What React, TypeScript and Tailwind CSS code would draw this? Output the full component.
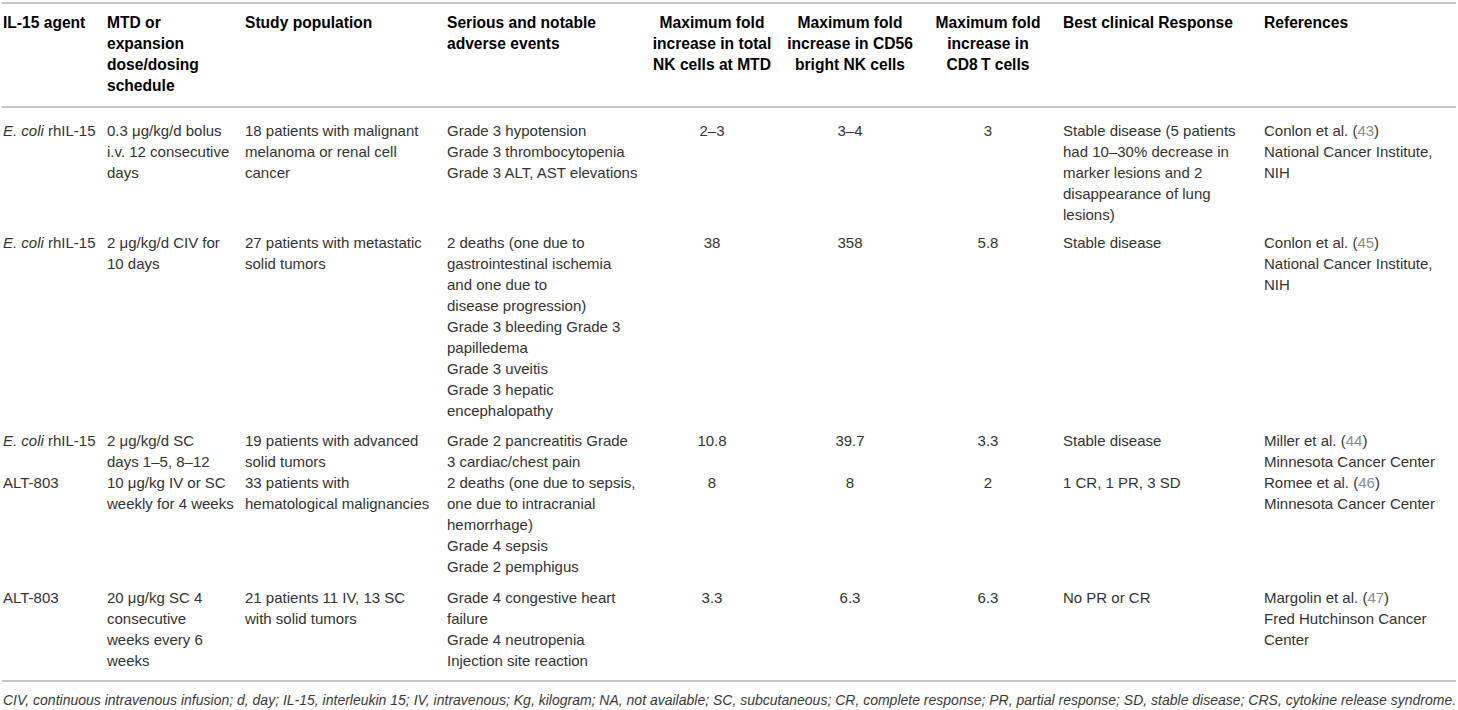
import React from 'react';

type Cell = React.ReactNode[];

type Row = {
  cells: Cell[];
  height: string;
};

const cols = 'grid grid-cols-[104px_138px_202px_196px_144px_132px_144px_201px_1fr]';

// columns 4,5,6 (0-based) are the numeric ones, centered
const centered = [4, 5, 6];

const Ref = ({ n }: { n: number }) => <span className="text-[#8c8c8c]">{n}</span>;

const header: Cell[] = [
  ['IL-15 agent'],
  ['MTD or', 'expansion', 'dose/dosing', 'schedule'],
  ['Study population'],
  ['Serious and notable', 'adverse events'],
  ['Maximum fold', 'increase in total', 'NK cells at MTD'],
  ['Maximum fold', 'increase in CD56', 'bright NK cells'],
  ['Maximum fold', 'increase in', 'CD8\u2009T cells'],
  ['Best clinical Response'],
  ['References'],
];

const ecoli = (
  <>
    <i>E. coli</i> rhIL-15
  </>
);

const rows: Row[] = [
  {
    height: 'h-[112px]',
    cells: [
      [ecoli],
      ['0.3 μg/kg/d bolus', 'i.v. 12 consecutive', 'days'],
      ['18 patients with malignant', 'melanoma or renal cell', 'cancer'],
      ['Grade 3 hypotension', 'Grade 3 thrombocytopenia', 'Grade 3 ALT, AST elevations'],
      ['2–3'],
      ['3–4'],
      ['3'],
      ['Stable disease (5 patients', 'had 10–30% decrease in', 'marker lesions and 2', 'disappearance of lung', 'lesions)'],
      [<>Conlon et al. (<Ref n={43} />)</>, 'National Cancer Institute,', 'NIH'],
    ],
  },
  {
    height: 'h-[198px]',
    cells: [
      [ecoli],
      ['2 μg/kg/d CIV for', '10 days'],
      ['27 patients with metastatic', 'solid tumors'],
      [
        '2 deaths (one due to',
        'gastrointestinal ischemia',
        'and one due to',
        'disease progression)',
        'Grade 3 bleeding Grade 3',
        'papilledema',
        'Grade 3 uveitis',
        'Grade 3 hepatic',
        'encephalopathy',
      ],
      ['38'],
      ['358'],
      ['5.8'],
      ['Stable disease'],
      [<>Conlon et al. (<Ref n={45} />)</>, 'National Cancer Institute,', 'NIH'],
    ],
  },
  {
    height: 'h-[42px]',
    cells: [
      [ecoli],
      ['2 μg/kg/d SC', 'days 1–5, 8–12'],
      ['19 patients with advanced', 'solid tumors'],
      ['Grade 2 pancreatitis Grade', '3 cardiac/chest pain'],
      ['10.8'],
      ['39.7'],
      ['3.3'],
      ['Stable disease'],
      [<>Miller et al. (<Ref n={44} />)</>, 'Minnesota Cancer Center'],
    ],
  },
  {
    height: 'h-[115px]',
    cells: [
      ['ALT-803'],
      ['10 μg/kg IV or SC', 'weekly for 4 weeks'],
      ['33 patients with', 'hematological malignancies'],
      ['2 deaths (one due to sepsis,', 'one due to intracranial', 'hemorrhage)', 'Grade 4 sepsis', 'Grade 2 pemphigus'],
      ['8'],
      ['8'],
      ['2'],
      ['1 CR, 1 PR, 3 SD'],
      [<>Romee et al. (<Ref n={46} />)</>, 'Minnesota Cancer Center'],
    ],
  },
  {
    height: 'h-[93px]',
    cells: [
      ['ALT-803'],
      ['20 μg/kg SC 4', 'consecutive', 'weeks every 6', 'weeks'],
      ['21 patients 11 IV, 13 SC', 'with solid tumors'],
      ['Grade 4 congestive heart', 'failure', 'Grade 4 neutropenia', 'Injection site reaction'],
      ['3.3'],
      ['6.3'],
      ['6.3'],
      ['No PR or CR'],
      [<>Margolin et al. (<Ref n={47} />)</>, 'Fred Hutchinson Cancer', 'Center'],
    ],
  },
];

function Lines({ lines, center }: { lines: Cell; center: boolean }) {
  return (
    <div className={center ? 'text-center' : 'pl-[3px]'}>
      {lines.map((l, i) => (
        <div key={i} className="whitespace-nowrap">
          {l}
        </div>
      ))}
    </div>
  );
}

export default function App() {
  return (
    <div className="w-[1458px] h-[710px] bg-white pt-[2px] font-['Liberation_Sans',Arial,sans-serif] overflow-hidden">
      <div className="mx-[2px] h-[2px] bg-[#c6c6c6]" />
      <div className={`${cols} pt-[8px] pb-[10px] text-[15.6px] leading-[21px] font-bold text-black`}>
        {header.map((c, i) => (
          <Lines key={i} lines={c} center={centered.includes(i)} />
        ))}
      </div>
      <div className="mx-[2px] h-[2px] bg-[#c6c6c6]" />
      <div className="pt-[12px] text-[15px] leading-[21px] text-[#333333]">
        {rows.map((r, ri) => (
          <div key={ri} className={`${cols} ${r.height}`}>
            {r.cells.map((c, i) => (
              <Lines key={i} lines={c} center={centered.includes(i)} />
            ))}
          </div>
        ))}
      </div>
      <div className="mx-[2px] h-[2px] bg-[#c6c6c6]" />
      <p className="pl-[3px] pt-[10px] text-[14px] leading-[16px] italic text-[#3a3a3a] whitespace-nowrap">
        CIV, continuous intravenous infusion; d, day; IL-15, interleukin 15; IV, intravenous; Kg, kilogram; NA, not
        available; SC, subcutaneous; CR, complete response; PR, partial response; SD, stable disease; CRS, cytokine
        release syndrome.
      </p>
    </div>
  );
}
